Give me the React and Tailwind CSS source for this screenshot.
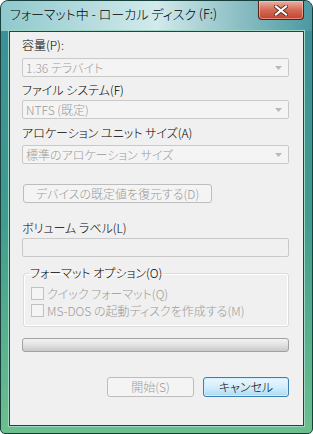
import React from "react";

const jp = "font-['Noto_Sans_CJK_JP',sans-serif] [font-feature-settings:'palt'] font-light";

const Combo = ({ text }) => (
  <div className="h-[19px] w-[267px] rounded-[2px] border border-[#c9c9c9] bg-[#f4f4f4] flex items-center pl-[3px] pr-[6px]">
    <span className="flex-1 text-[12px] leading-4 text-[#9a9a9a]">{text}</span>
    <svg width="7" height="4" viewBox="0 0 7 4">
      <path d="M0 0h7L3.5 4z" fill="#b9b9b9" />
    </svg>
  </div>
);

const Label = ({ children, className = "" }) => (
  <div className={`text-[12px] leading-4 text-black ${className}`}>{children}</div>
);

const Check = ({ children }) => (
  <div className="flex items-center h-[13px] gap-[3px]">
    <div className="w-[13px] h-[13px] border border-[#c2c2c2] bg-[#f4f4f4]" />
    <span className="text-[12px] leading-4 text-[#9a9a9a]">{children}</span>
  </div>
);

export default function App() {
  return (
    <div className={`w-[313px] h-[434px] flex flex-col border border-[#173f3c] rounded-t-[8px] rounded-b-[5px] overflow-hidden bg-gradient-to-b from-[#3b8e9a] via-[#3f9c8e] to-[#6cc08c] ${jp}`}>
      {/* title bar */}
      <div className="h-[30px] flex items-start bg-gradient-to-r from-[#8fc9cd] via-[#d2eaec] to-[#4a99a2]">
        <div className="pl-[9px] pt-[5px] text-[13px] leading-4 text-black">
          フォーマット中 - ローカル ディスク (F:)
        </div>
        <div className="ml-auto mr-[8px] w-[46px] h-[19px] rounded-b-[4px] border border-t-0 border-[#5a1f17] bg-gradient-to-b from-[#eab0a4] via-[#d26a56] to-[#c4432c] flex items-center justify-center shadow-[inset_0_0_0_1px_rgba(255,210,200,0.5)]">
          <svg width="14" height="11" viewBox="0 0 14 11">
            <path d="M2 1.5l10 8M12 1.5l-10 8" stroke="#5a2a22" strokeWidth="4" strokeLinecap="square" />
            <path d="M2 1.5l10 8M12 1.5l-10 8" stroke="#ffffff" strokeWidth="2.2" strokeLinecap="square" />
          </svg>
        </div>
      </div>

      {/* client area */}
      <div className="mx-[8px] h-[395px] border border-[#23433e] bg-[#f0f0f0] shadow-[0_0_0_1px_#9fd6c6] flex flex-col pl-[12px] pt-[5px]">
        <Label>容量(P):</Label>
        <div className="mt-[5px]"><Combo text="1.36 テラバイト" /></div>

        <Label className="mt-[5px]">ファイル システム(F)</Label>
        <div className="mt-[2px]"><Combo text="NTFS (既定)" /></div>

        <Label className="mt-[6px]">アロケーション ユニット サイズ(A)</Label>
        <div className="mt-[4px]"><Combo text="標準のアロケーション サイズ" /></div>

        <button className="mt-[20px] ml-[1px] w-[189px] h-[19px] rounded-[3px] border border-[#bdbdbd] bg-[#f4f4f4] text-[12px] leading-4 text-[#9a9a9a]">
          デバイスの既定値を復元する(D)
        </button>

        <Label className="mt-[17px]">ボリューム ラベル(L)</Label>
        <div className="mt-[2px] w-[267px] h-[19px] rounded-[2px] border border-[#c9c9c9] bg-[#f0f0f0]" />

        <fieldset className="mt-[8px] ml-[1px] w-[266px] h-[62px] rounded-[3px] border border-[#dcdcdc] px-[7px] shadow-[inset_0_0_0_1px_#ffffff]">
          <legend className="text-[12px] leading-4 text-black px-[1px] -ml-[2px]">フォーマット オプション(O)</legend>
          <div className="mt-[6px] flex flex-col gap-[4px]">
            <Check>クイック フォーマット(Q)</Check>
            <Check>MS-DOS の起動ディスクを作成する(M)</Check>
          </div>
        </fieldset>

        <div className="mt-[11px] w-[267px] h-[14px] rounded-[3px] border border-[#a2a2a2] bg-gradient-to-b from-[#f3f3f3] via-[#e2e2e2] to-[#c9c9c9]" />

        <div className="mt-[25px] w-[267px] flex justify-end gap-[9px]">
          <button className="w-[87px] h-[20px] rounded-[3px] border border-[#bdbdbd] bg-[#f4f4f4] text-[12px] leading-4 text-[#9a9a9a]">
            開始(S)
          </button>
          <button className="w-[86px] h-[20px] rounded-[3px] border border-[#3c7fb1] bg-gradient-to-b from-[#eaf6fd] via-[#d5eefb] to-[#a9daf4] text-[12px] leading-4 text-black shadow-[inset_0_0_0_1px_#cfeeff]">
            キャンセル
          </button>
        </div>
      </div>
    </div>
  );
}
